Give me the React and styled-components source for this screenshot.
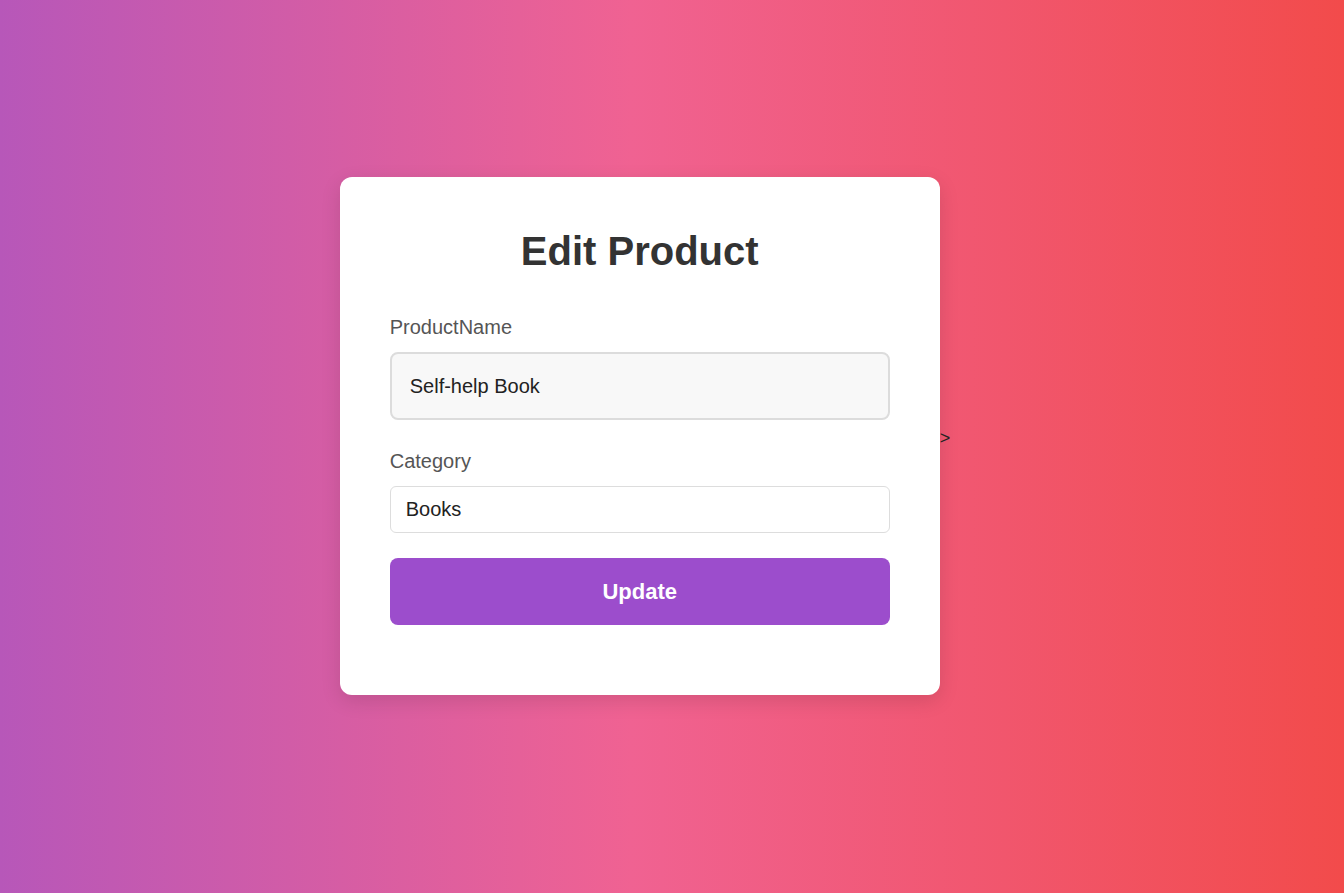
import React from 'react';
import styled, { createGlobalStyle } from 'styled-components';

const GlobalStyle = createGlobalStyle`
  * { box-sizing: border-box; }
  body {
    margin: 0;
    font-family: "Liberation Sans", Arial, sans-serif;
  }
`;

const Page = styled.div`
  min-height: 100vh;
  display: flex;
  justify-content: center;
  align-items: center;
  padding-bottom: 21px;
  background: linear-gradient(to right, #b757b9 0%, #f06292 47%, #f24b4b 100%);
`;

const Card = styled.form`
  width: 600px;
  padding: 50px;
  background: #fff;
  border-radius: 12px;
  box-shadow: 0 6px 20px rgba(0, 0, 0, 0.12);
`;

const Title = styled.h2`
  margin: 0 0 42px;
  padding-top: 2px;
  text-align: center;
  font-size: 40px;
  font-weight: 700;
  color: #333;
`;

const Field = styled.div`
  margin-bottom: ${(p) => p.$gap || '30px'};
`;

const Label = styled.label`
  display: block;
  margin-bottom: 13px;
  font-size: 20px;
  color: #555;
`;

const Input = styled.input`
  display: block;
  width: 100%;
  font-family: inherit;
  font-size: 20px;
  color: #222;
  outline: none;
  height: ${(p) => (p.$filled ? '68px' : '47px')};
  padding: ${(p) => (p.$filled ? '0 18px' : '0 15px')};
  background: ${(p) => (p.$filled ? '#f8f8f8' : '#fff')};
  border: ${(p) => (p.$filled ? '2px solid #dcdcdc' : '1px solid #ddd')};
  border-radius: ${(p) => (p.$filled ? '8px' : '6px')};
`;

const Button = styled.button`
  display: block;
  width: 100%;
  height: 67px;
  margin-bottom: 20px;
  border: none;
  border-radius: 8px;
  background: #9c4dcc;
  color: #fff;
  font-family: inherit;
  font-size: 22px;
  font-weight: 700;
  cursor: pointer;
`;

const Stray = styled.span`
  margin-right: 54px;
  padding-top: 4px;
  font-size: 18px;
  color: #222;
`;

export default function App() {
  return (
    <>
      <GlobalStyle />
      <Page>
        <Card onSubmit={(e) => e.preventDefault()}>
          <Title>Edit Product</Title>
          <Field>
            <Label>ProductName</Label>
            <Input $filled defaultValue="Self-help Book" />
          </Field>
          <Field $gap="25px">
            <Label>Category</Label>
            <Input defaultValue="Books" />
          </Field>
          <Button type="submit">Update</Button>
        </Card>
        <Stray>&gt;</Stray>
      </Page>
    </>
  );
}
